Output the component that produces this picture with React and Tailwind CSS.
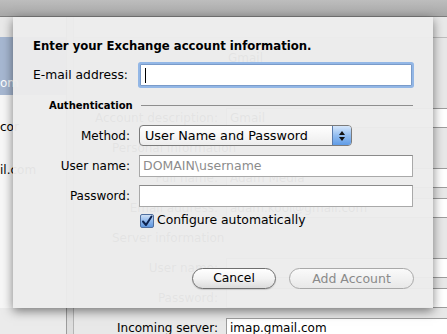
export default function App() {
  const Row = ({ label, value, field = true, header }) => (
    <div className="flex items-center h-[30px]">
      {header ? (
        <div className="pl-[38px] text-[12px] leading-[14px]">{header}</div>
      ) : (
        <>
          <div className="w-[144px] text-right text-[12px] leading-[14px]">{label}</div>
          {field ? (
            <div className="ml-[8px] w-[240px] h-[20px] bg-white border border-[#9d9d9d] pl-[3px] text-[12px] leading-[18px]">
              {value}
            </div>
          ) : (
            <div className="ml-[10px] text-[12px] leading-[14px]">{value}</div>
          )}
        </>
      )}
    </div>
  );

  return (
    <div className="relative w-[447px] h-[334px] overflow-hidden bg-[#e8e8e8] font-['DejaVu_Sans',sans-serif] text-black">
      {/* toolbar band */}
      <div className="h-[17px] bg-gradient-to-b from-[#bdbdbd] to-[#a8a8a8] border-b border-[#7d7d7d]" />
      <div className="flex h-[317px]">
        {/* accounts sidebar */}
        <div className="w-[67px] shrink-0 flex flex-col border-r border-[#9c9c9c]">
          <div className="h-[20px] bg-[#e9e9e9]" />
          <div className="h-[58px] bg-[#a6b7d1] pt-[39px] text-[12px] leading-[14px] text-white whitespace-nowrap">
            om
          </div>
          <div className="h-[213px] bg-[#f7f7f7] pt-[25px] text-[12px] leading-[14px] whitespace-nowrap">
            <div>cor</div>
            <div className="mt-[29px]">il.com</div>
          </div>
          <div className="flex-1 bg-[#ebebeb]" />
        </div>
        <div className="w-[7px] shrink-0 bg-[#dedede] border-r border-[#b4b4b4]" />
        {/* account details */}
        <div className="flex-1 flex flex-col">
          <div className="h-[21px] shrink-0 bg-[#e9e9e9] border-b border-[#bdbdbd]" />
          <div className="pt-[5px] flex flex-col">
            <Row label="" value="Gmail" field={false} />
            <Row label="" value="" field={false} />
            <Row label="Account description:" value="Gmail" />
            <Row header="Personal information" />
            <Row label="Full name:" value="Adam Media" />
            <Row label="Email address:" value="adam.kool@gmail.com" />
            <Row header="Server information" />
            <Row label="User name:" value="" />
            <Row label="Password:" value="" />
            <Row label="Incoming server:" value="imap.gmail.com" />
          </div>
        </div>
      </div>

      {/* sheet */}
      <div className="absolute left-[13px] top-[17px] w-[420px] h-[291px] bg-[rgba(236,236,236,0.96)] shadow-[0_3px_10px_rgba(0,0,0,0.5)] pl-[20px] pr-[20px] pt-[21px]">
        <div className="text-[11.7px] leading-[16px] font-bold whitespace-nowrap">
          Enter your Exchange account information.
        </div>

        {/* E-mail */}
        <div className="mt-[10px] flex items-center h-[22px]">
          <div className="w-[95px] text-right text-[12.3px] whitespace-nowrap">E-mail address:</div>
          <div className="ml-[12px] w-[272px] h-[22px] bg-white border border-[#7a9bc9] rounded-[1px] shadow-[0_0_0_2px_#93b7e6] flex items-center pl-[4px]">
            <div className="w-px h-[15px] bg-black" />
          </div>
        </div>

        {/* Authentication separator */}
        <div className="mt-[12px] flex items-center h-[14px]">
          <div className="ml-[16px] text-[10px] font-bold whitespace-nowrap">Authentication</div>
          <div className="ml-[8px] flex-1 h-px bg-[#8e8e8e]" />
        </div>

        {/* Method */}
        <div className="mt-[13px] flex items-center h-[21px]">
          <div className="w-[97px] text-right text-[12px] whitespace-nowrap">Method:</div>
          <div className="ml-[9px] w-[213px] h-[21px] flex rounded-[4px] border border-[#7b7b7b] bg-gradient-to-b from-white to-[#ededed] overflow-hidden">
            <div className="flex-1 pl-[5px] text-[12.8px] leading-[19px] whitespace-nowrap">User Name and Password</div>
            <div className="w-[19px] border-l border-[#5a7bab] bg-gradient-to-b from-[#d6e7fb] via-[#92bdf0] to-[#5f9be6] flex flex-col items-center justify-center gap-[2px]">
              <svg width="6" height="4" viewBox="0 0 6 4"><path d="M3 0 L6 4 L0 4 Z" fill="#111" /></svg>
              <svg width="6" height="4" viewBox="0 0 6 4"><path d="M0 0 L6 0 L3 4 Z" fill="#111" /></svg>
            </div>
          </div>
        </div>

        {/* User name */}
        <div className="mt-[9px] flex items-center h-[22px]">
          <div className="w-[97px] text-right text-[12px] whitespace-nowrap">User name:</div>
          <div className="ml-[9px] w-[274px] h-[22px] bg-white border border-[#a9a9a9] border-t-[#8a8a8a] pl-[3px] text-[12.5px] leading-[20px] text-[#8c8c8c] whitespace-nowrap">
            DOMAIN\username
          </div>
        </div>

        {/* Password */}
        <div className="mt-[8px] flex items-center h-[22px]">
          <div className="w-[97px] text-right text-[12px] whitespace-nowrap">Password:</div>
          <div className="ml-[9px] w-[274px] h-[22px] bg-white border border-[#a9a9a9] border-t-[#8a8a8a]" />
        </div>

        {/* Configure automatically */}
        <div className="mt-[6px] flex items-center h-[15px]">
          <div className="ml-[107px] w-[14px] h-[14px] rounded-[2px] border border-[#4f6f9f] bg-gradient-to-b from-[#cfe0f5] via-[#8fb8ec] to-[#5f96dd] flex items-center justify-center">
            <svg width="12" height="12" viewBox="0 0 12 12">
              <path d="M2 6.5 L5 10 L10.5 1.5" fill="none" stroke="#0d2350" strokeWidth="2" strokeLinecap="round" strokeLinejoin="round" />
            </svg>
          </div>
          <div className="ml-[3px] text-[12.4px] whitespace-nowrap">Configure automatically</div>
        </div>

        {/* Buttons */}
        <div className="mt-[40px] flex justify-end gap-[13px]">
          <div className="w-[84px] h-[21px] rounded-full border border-[#6f6f6f] bg-gradient-to-b from-white via-[#f3f3f3] to-[#dcdcdc] text-center text-[12.3px] leading-[19px] shadow-[0_1px_1px_rgba(0,0,0,0.15)]">
            Cancel
          </div>
          <div className="w-[125px] h-[21px] mr-[-1px] rounded-full border border-[#a9a9a9] bg-gradient-to-b from-[#fafafa] to-[#e8e8e8] text-center text-[12.5px] leading-[19px] text-[#8a8a8a]">
            Add Account
          </div>
        </div>
      </div>
    </div>
  );
}
